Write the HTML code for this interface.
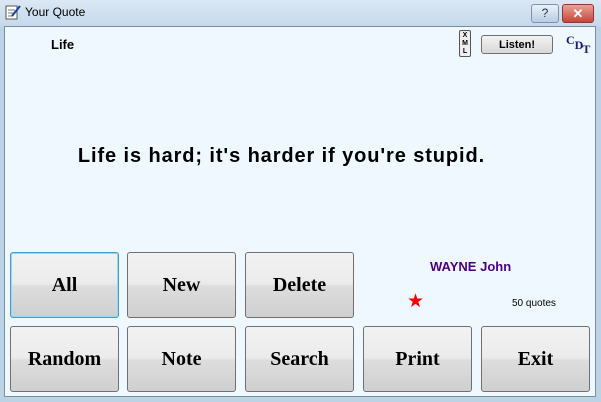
<!DOCTYPE html><html><head><style>
body{margin:0;width:601px;height:402px;overflow:hidden;background:#bcd3e6;font-family:"Liberation Sans",sans-serif;position:relative}
.title{position:absolute;left:0;top:0;width:601px;height:27px;background:linear-gradient(#dbe8f4,#c5d8ea)}
.client{position:absolute;left:4px;top:26px;width:590px;height:369px;background:#f0f8ff;border:1px solid #7a8ea3}
.btn{position:absolute;width:109px;height:66px;border:1px solid #707070;border-radius:3px;background:linear-gradient(#f2f2f2 0%,#ebebeb 48%,#dddddd 52%,#cfcfcf 100%);font-family:"Liberation Serif",serif;font-weight:bold;font-size:20px;display:flex;align-items:center;justify-content:center;box-sizing:border-box}
.abs{position:absolute}
</style></head><body>
<div class="title"></div>
<svg class="abs" style="left:5px;top:4px" width="16" height="16"><rect x="1" y="2" width="11" height="13" fill="#fff" stroke="#555"/><line x1="3" y1="6" x2="10" y2="6" stroke="#777"/><line x1="3" y1="9" x2="10" y2="9" stroke="#777"/><line x1="3" y1="12" x2="8" y2="12" stroke="#777"/><line x1="7" y1="12" x2="15" y2="2" stroke="#1a3fa0" stroke-width="2"/></svg>
<div class="abs" style="left:25px;top:5px;font-size:12px;color:#000">Your Quote</div>
<div class="abs" style="left:531px;top:4px;width:26px;height:17px;border:1px solid #7c93ad;border-radius:3px;background:linear-gradient(#e9f1f9,#b9cde2);font-size:12px;text-align:center;line-height:17px;color:#333">?</div>
<div class="abs" style="left:562px;top:4px;width:30px;height:17px;border:1px solid #8a3a32;border-radius:3px;background:linear-gradient(#e8a495,#c8453a);font-size:13px;font-weight:bold;text-align:center;line-height:17px;color:#fff">✕</div>
<div class="client"></div>
<div class="abs" style="left:51px;top:37px;font-size:13px;font-weight:bold">Life</div>
<div class="abs" style="left:459px;top:30px;width:12px;height:27px;border:1px solid #555;border-radius:2px;background:#eee;font-size:7px;font-weight:bold;text-align:center;line-height:8px;padding-top:1px;box-sizing:border-box">X<br>M<br>L</div>
<div class="abs" style="left:481px;top:35px;width:72px;height:19px;border:1px solid #707070;border-radius:3px;background:linear-gradient(#f2f2f2,#d8d8d8);font-size:11px;font-weight:bold;text-align:center;line-height:19px;box-sizing:border-box">Listen!</div>
<div class="abs" style="left:566px;top:33px;font-family:'Liberation Serif',serif;font-weight:bold;color:#1a1a7a;font-size:12px">C<span style="position:relative;top:5px">D</span><span style="position:relative;top:9px;margin-left:-1px">T</span></div>
<div class="abs" style="left:0;width:563px;top:145px;text-align:center;font-size:20px;letter-spacing:0.9px;font-weight:bold">Life is hard; it's harder if you're stupid.</div>
<div class="abs" style="left:430px;top:259px;font-size:13px;font-weight:bold;color:#4b0082">WAYNE John</div>
<div class="abs" style="left:407px;top:290px;font-size:19px;color:#f00">★</div>
<div class="abs" style="left:512px;top:298px;font-size:10px">50 quotes</div>
<div class="btn" style="left:10px;top:252px;border-color:#3c9fd0;box-shadow:inset 0 0 0 1px #9fd6ef">All</div>
<div class="btn" style="left:127px;top:252px">New</div>
<div class="btn" style="left:245px;top:252px">Delete</div>
<div class="btn" style="left:10px;top:326px">Random</div>
<div class="btn" style="left:127px;top:326px">Note</div>
<div class="btn" style="left:245px;top:326px">Search</div>
<div class="btn" style="left:363px;top:326px">Print</div>
<div class="btn" style="left:481px;top:326px">Exit</div>
</body></html>
